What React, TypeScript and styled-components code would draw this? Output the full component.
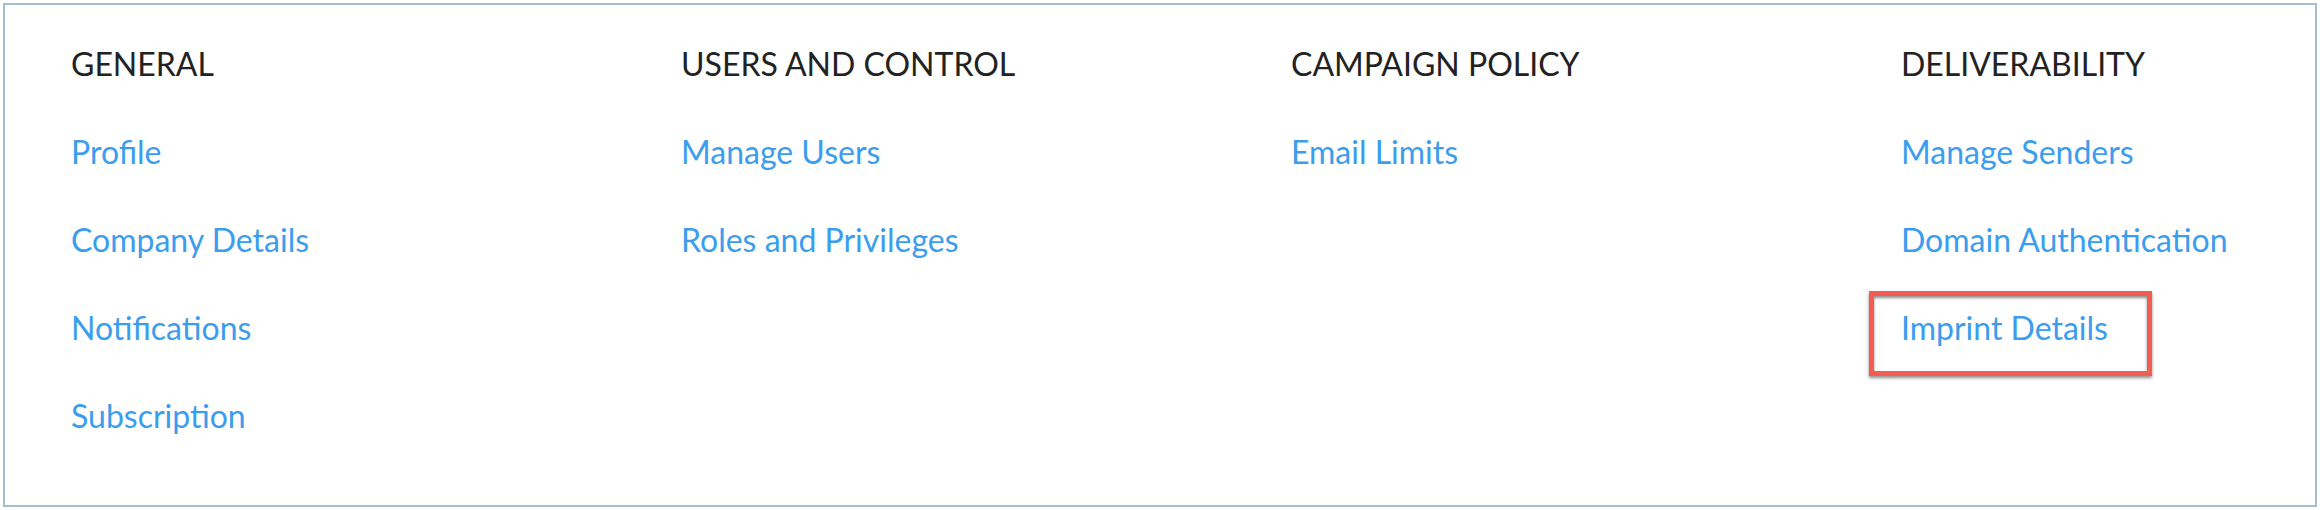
import React from "react";
import styled, { createGlobalStyle } from "styled-components";

const GlobalStyle = createGlobalStyle`
  html, body {
    margin: 0;
    padding: 0;
    background: #ffffff;
  }
  body {
    font-family: Lato, "Open Sans", "Liberation Sans", sans-serif;
    -webkit-font-smoothing: antialiased;
  }
`;

type Section = {
  title: string;
  links: { label: string; highlighted?: boolean }[];
};

const sections: Section[] = [
  {
    title: "GENERAL",
    links: [
      { label: "Profile" },
      { label: "Company Details" },
      { label: "Notifications" },
      { label: "Subscription" },
    ],
  },
  {
    title: "USERS AND CONTROL",
    links: [{ label: "Manage Users" }, { label: "Roles and Privileges" }],
  },
  {
    title: "CAMPAIGN POLICY",
    links: [{ label: "Email Limits" }],
  },
  {
    title: "DELIVERABILITY",
    links: [
      { label: "Manage Senders" },
      { label: "Domain Authentication" },
      { label: "Imprint Details", highlighted: true },
    ],
  },
];

const Panel = styled.div`
  box-sizing: border-box;
  margin: 3px;
  height: 504px;
  border: 2px solid #a7bfcb;
  padding: 39px 0 0 66px;
  display: grid;
  grid-template-columns: repeat(3, 610px) 1fr;
  align-items: start;
`;

const Column = styled.div`
  display: flex;
  flex-direction: column;
  gap: 48px;
`;

const Heading = styled.h3`
  margin: 0;
  font-size: 32px;
  line-height: 40px;
  font-weight: 400;
  color: #222222;
`;

const LinkItem = styled.a`
  position: relative;
  align-self: flex-start;
  font-size: 32px;
  line-height: 40px;
  color: #3b9ded;
  text-decoration: none;
  cursor: pointer;
`;

const Highlight = styled.span`
  position: absolute;
  top: -17px;
  left: -32px;
  right: -44px;
  bottom: -28px;
  border: 5px solid #f65b50;
  box-shadow: 0 2px 3px rgba(0, 0, 0, 0.45),
    inset 0 2px 3px rgba(0, 0, 0, 0.45);
  pointer-events: none;
`;

export default function App() {
  return (
    <>
      <GlobalStyle />
      <Panel>
        {sections.map((section) => (
          <Column key={section.title}>
            <Heading>{section.title}</Heading>
            {section.links.map((link) => (
              <LinkItem key={link.label}>
                {link.label}
                {link.highlighted && <Highlight />}
              </LinkItem>
            ))}
          </Column>
        ))}
      </Panel>
    </>
  );
}
